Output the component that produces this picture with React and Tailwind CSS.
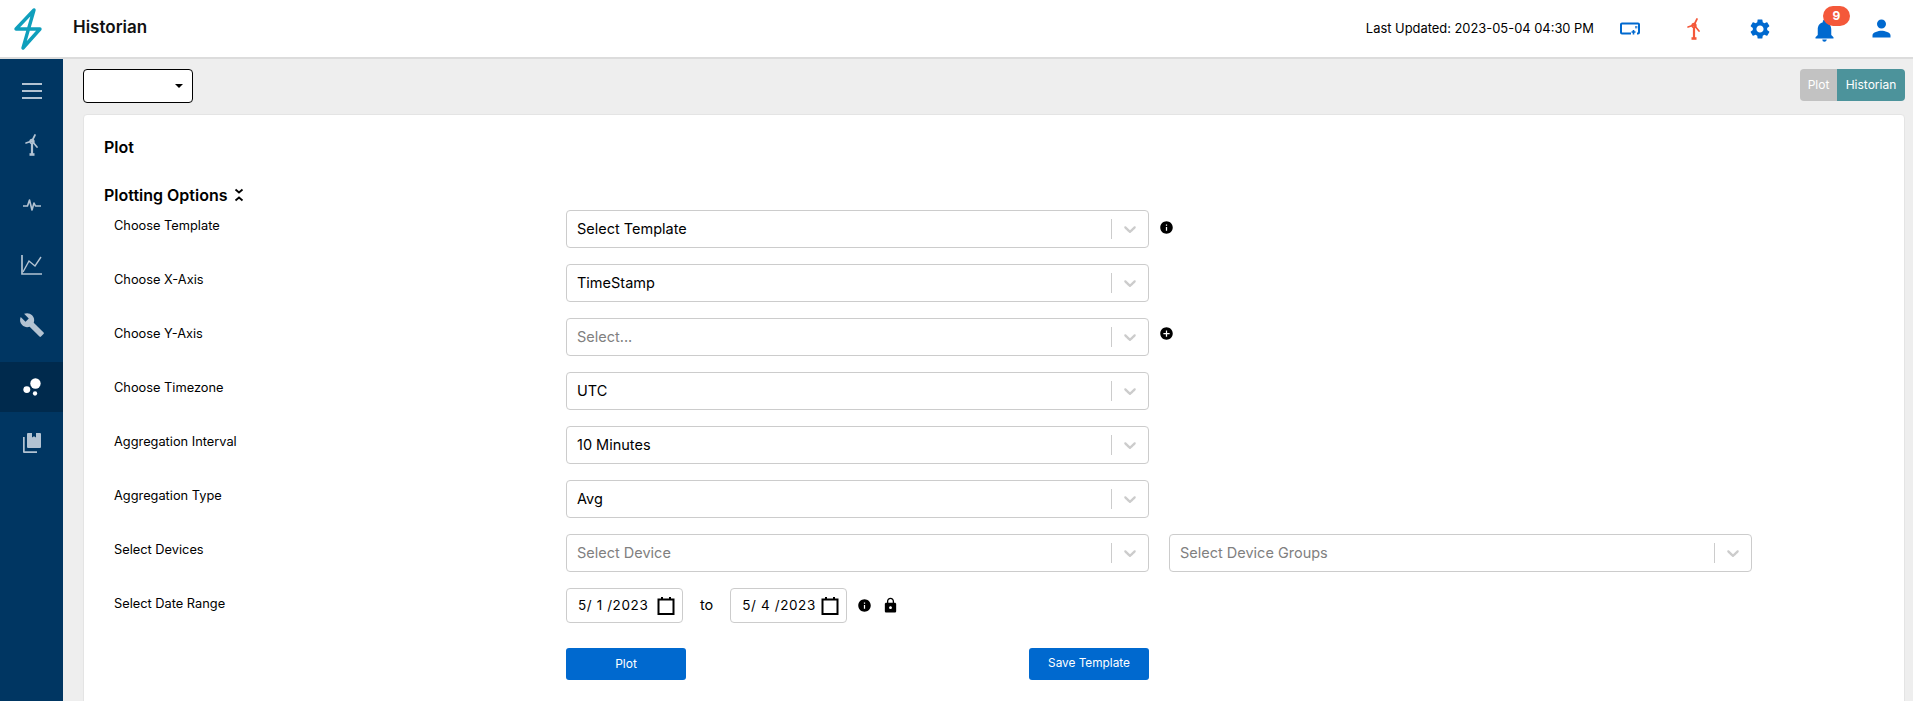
import React from "react";
import { MdBuild, MdBubbleChart, MdSettings, MdNotifications, MdPerson, MdInfo, MdAddCircle, MdLock } from "react-icons/md";

const Chevron = () => (
  <svg width="20" height="20" viewBox="0 0 20 20" fill="#cccccc">
    <path d="M4.516 7.548c0.436-0.446 1.043-0.481 1.576 0l3.908 3.747 3.908-3.747c0.533-0.481 1.141-0.446 1.574 0 0.436 0.445 0.408 1.197 0 1.615-0.406 0.418-4.695 4.502-4.695 4.502-0.217 0.223-0.502 0.335-0.787 0.335s-0.57-0.112-0.789-0.335c0 0-4.287-4.084-4.695-4.502s-0.436-1.17 0-1.615z" />
  </svg>
);

const Turbine = ({ color, size = 24 }) => (
  <svg width={size} height={size} viewBox="0 0 24 24" fill="none" stroke={color} strokeWidth="1.7" strokeLinecap="round">
    <path d="M12 8 L6 10 M12 8 L15 2 M12 8 L17 14" />
    <circle cx="12" cy="8.5" r="1.8" />
    <path d="M12 10.5 L12 21" strokeWidth="2.2" />
    <path d="M9.5 21.5 H14.5" strokeWidth="2.6" strokeLinecap="butt" />
  </svg>
);

const Pulse = () => (
  <svg width="20" height="16" viewBox="0 0 20 16" fill="none" stroke="#b3c3d2" strokeWidth="1.6" strokeLinejoin="round">
    <path d="M1 9 H5.5 L7.5 3 L10 13 L12 6 L13.5 9 H19" />
  </svg>
);

const ChartIcon = () => (
  <svg width="22" height="20" viewBox="0 0 22 20" fill="none" stroke="#b3c3d2" strokeWidth="1.7">
    <path d="M1 0 V19 H21" />
    <path d="M2 17 L8 6 L14 11 L20 2" strokeWidth="1.4" />
  </svg>
);

const BookIcon = () => (
  <svg width="24" height="24" viewBox="0 0 24 24" fill="#b3c3d2">
    <path d="M8 2 H12 V6.5 L14 5.2 L16 6.5 V2 H20 a1 1 0 0 1 1 1 V16 a1 1 0 0 1 -1 1 H8 a1 1 0 0 1 -1 -1 V3 a1 1 0 0 1 1 -1 Z" />
    <path d="M3 6 H4.7 V20.3 H17 V22 H4 a1 1 0 0 1 -1 -1 Z" />
  </svg>
);

const CalendarIcon = () => (
  <svg width="18" height="18" viewBox="0 0 18 18" fill="none" stroke="#000" strokeWidth="2">
    <rect x="1.5" y="2.5" width="15" height="14.5" />
    <path d="M5 0 V3 M13 0 V3" />
  </svg>
);

const sideItems = [
  { icon: <Turbine color="#b3c3d2" size={24} />, cls: "h-[60px]" },
  { icon: <Pulse />, cls: "h-[60px]" },
  { icon: <ChartIcon />, cls: "h-[60px]" },
  { icon: <MdBuild size={26} color="#b3c3d2" />, cls: "h-[60px] mb-[7px]" },
  { icon: <MdBubbleChart size={26} color="#ffffff" />, cls: "h-[50px] bg-[#002a4d]" },
  { icon: <BookIcon />, cls: "h-[62px]" },
];

const Select = ({ value, placeholder, className = "w-[583px]" }) => (
  <div className={`flex h-[38px] items-center rounded border border-[#cccccc] bg-white pl-[10px] ${className}`}>
    <span className={`flex-1 text-[14.5px] ${placeholder ? "text-[#808080]" : "text-black"}`}>{value || placeholder}</span>
    <span className="h-[20px] w-px bg-[#cccccc]" />
    <span className="flex w-[36px] justify-center"><Chevron /></span>
  </div>
);

const Row = ({ label, children }) => (
  <div className="flex h-[38px] items-start">
    <div className="w-[462px] pl-[10px] pt-[7px] text-[12.8px] leading-[18px] text-black">{label}</div>
    <div className="flex items-center">{children}</div>
  </div>
);

const DateBox = ({ value }) => (
  <div className="flex h-[35px] w-[117px] items-center justify-between rounded border border-[#cccccc] pl-[11px] pr-[7px] text-[13.5px] tracking-[0.6px] text-black">
    <span>{value}</span>
    <CalendarIcon />
  </div>
);

export default function App() {
  return (
    <div className="flex h-[701px] w-full flex-col overflow-hidden bg-[#eeeeee] font-['Inter',sans-serif]">
      <header className="flex h-[59px] shrink-0 items-center border-b-2 border-[#dcdcdc] bg-white">
        <div className="flex w-[73px] justify-start pl-[13px]">
          <svg width="30" height="44" viewBox="0 0 30 44" fill="none" stroke="#0f9fbc" strokeWidth="3.4" strokeLinecap="round" strokeLinejoin="round">
            <path d="M21 3 L3 22 L27 22 L10 41 L21 3 Z" />
          </svg>
        </div>
        <h1 className="-mt-[2px] text-[17px] font-semibold text-[#111111]">Historian</h1>
        <div className="ml-auto flex items-center">
          <span className="text-[12.9px] text-black">Last Updated: 2023-05-04 04:30 PM</span>
          <svg className="ml-[26px]" width="20" height="13" viewBox="0 0 20 13" fill="none">
            <path d="M11 11.5 H2 a1 1 0 0 1 -1 -1 V2.5 a1 1 0 0 1 1 -1 H18 a1 1 0 0 1 1 1 V10.5 a1 1 0 0 1 -1 1 H17" stroke="#0069cf" strokeWidth="2" />
            <path d="M11.5 10 H15.5 M13.5 8 V12.5" stroke="#0069cf" strokeWidth="1.6" />
            <rect x="15" y="4" width="2.4" height="2.4" fill="#4c93dc" />
          </svg>
          <span className="ml-[42px] flex w-[24px] justify-center"><Turbine color="#f4583a" size={24} /></span>
          <span className="ml-[42px]"><MdSettings size={24} color="#0069cf" /></span>
          <span className="relative ml-[39px] mt-[4px]">
            <MdNotifications size={27} color="#0069cf" />
            <span className="absolute left-[12px] top-[-11px] flex h-[20px] w-[27px] items-center justify-center rounded-full bg-[#f4583a] text-[12px] font-bold text-white">9</span>
          </span>
          <span className="ml-[30px] mr-[18px]"><MdPerson size={27} color="#0069cf" /></span>
        </div>
      </header>
      <div className="flex min-h-0 flex-1">
        <aside className="w-[63px] shrink-0 bg-[#003662]">
          <div className="flex h-[56px] items-center justify-center pt-[7px]">
            <div className="flex flex-col gap-[5px]">
              <span className="h-[2px] w-[20px] bg-[#b3c3d2]" />
              <span className="h-[2px] w-[20px] bg-[#b3c3d2]" />
              <span className="h-[2px] w-[20px] bg-[#b3c3d2]" />
            </div>
          </div>
          <div>
            {sideItems.map((it, i) => (
              <div key={i} className={`flex items-center justify-center ${it.cls}`}>{it.icon}</div>
            ))}
          </div>
        </aside>
        <main className="min-w-0 flex-1 pl-[20px] pr-[8px] pt-[10px]">
          <div className="flex h-[34px] items-start justify-between">
            <div className="relative h-[34px] w-[110px] rounded border border-black bg-white">
              <span className="absolute right-[9px] top-[14px] h-0 w-0 border-x-[4px] border-t-[4px] border-x-transparent border-t-black" />
            </div>
            <div className="flex h-[32px] overflow-hidden rounded text-[12px] text-white">
              <span className="flex w-[37px] items-center justify-center bg-[#c2c2c2]">Plot</span>
              <span className="flex w-[68px] items-center justify-center bg-[#4c939b]">Historian</span>
            </div>
          </div>
          <section className="mt-[11px] h-[600px] rounded border border-[#e4e4e4] bg-white pl-[20px] pt-[22px]">
            <h2 className="text-[16px] font-semibold leading-[20px] text-black">Plot</h2>
            <div className="mt-[28px] flex h-[20px] items-center text-[16px] font-semibold text-black">
              Plotting Options
              <svg className="ml-[6px]" width="10" height="14" viewBox="0 0 10 14" fill="none" stroke="#000" strokeWidth="1.8">
                <path d="M1.5 1.5 L5 4.5 L8.5 1.5 M1.5 12.5 L5 9.5 L8.5 12.5" />
              </svg>
            </div>
            <div className="mt-[5px] flex flex-col gap-[16px]">
              <Row label="Choose Template">
                <Select value="Select Template" />
                <span className="ml-[10px] -mt-[4px]"><MdInfo size={15} color="#000" /></span>
              </Row>
              <Row label="Choose X-Axis"><Select value="TimeStamp" /></Row>
              <Row label="Choose Y-Axis">
                <Select placeholder="Select..." />
                <span className="ml-[10px] -mt-[8px]"><MdAddCircle size={15} color="#000" /></span>
              </Row>
              <Row label="Choose Timezone"><Select value="UTC" /></Row>
              <Row label="Aggregation Interval"><Select value="10 Minutes" /></Row>
              <Row label="Aggregation Type"><Select value="Avg" /></Row>
              <Row label="Select Devices">
                <Select placeholder="Select Device" />
                <Select placeholder="Select Device Groups" className="ml-[20px] w-[583px]" />
              </Row>
              <Row label="Select Date Range">
                <DateBox value="5/ 1 /2023" />
                <span className="mx-[17px] -mt-[2px] text-[14.5px] text-black">to</span>
                <DateBox value="5/ 4 /2023" />
                <span className="ml-[10px]"><MdInfo size={15} color="#000" /></span>
                <span className="ml-[10px]"><MdLock size={17} color="#000" /></span>
              </Row>
            </div>
            <div className="ml-[462px] mt-[22px] flex w-[583px] justify-between">
              <button className="h-[32px] w-[120px] rounded-[3px] bg-[#0069cf] text-[12px] text-white">Plot</button>
              <button className="h-[32px] w-[120px] rounded-[3px] bg-[#0069cf] text-[11.8px] text-white">Save Template</button>
            </div>
          </section>
        </main>
      </div>
    </div>
  );
}
